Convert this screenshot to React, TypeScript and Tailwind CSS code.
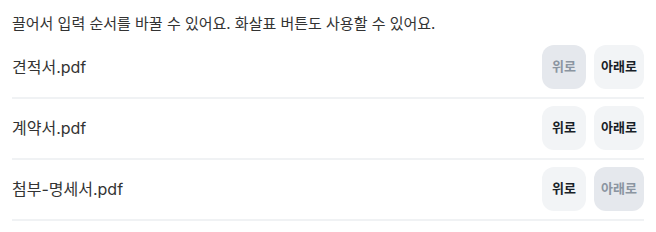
import React from "react";

const files = [
  { name: "견적서.pdf", upDisabled: true, downDisabled: false },
  { name: "계약서.pdf", upDisabled: false, downDisabled: false },
  { name: "첨부-명세서.pdf", upDisabled: false, downDisabled: true },
];

function Btn({ label, disabled, wide }: { label: string; disabled: boolean; wide?: boolean }) {
  return (
    <button
      disabled={disabled}
      className={
        disabled
          ? "h-11 rounded-xl bg-[#e5e8ed] text-[13px] font-semibold text-[#8b95a1] flex items-center justify-center " + (wide ? "w-[50px]" : "w-11")
          : "h-11 rounded-xl bg-[#f2f4f6] text-[13px] font-bold text-[#191f28] flex items-center justify-center " + (wide ? "w-[50px]" : "w-11")
      }
    >
      {label}
    </button>
  );
}

export default function App() {
  return (
    <div
      className="w-[656px] h-[232px] bg-white px-3 pt-3 text-[#333333]"
      style={{ fontFamily: '"Inter", "Noto Sans CJK KR", sans-serif' }}
    >
      <p className="text-[15px] leading-6 mb-[2px]">
        끌어서 입력 순서를 바꿀 수 있어요. 화살표 버튼도 사용할 수 있어요.
      </p>
      <ul>
        {files.map((f) => (
          <li
            key={f.name}
            className="flex items-center justify-between pt-[7px] pb-2 border-b-2 border-[#f0f2f4]"
          >
            <span className="text-[16px]">{f.name}</span>
            <div className="flex gap-2">
              <Btn label="위로" disabled={f.upDisabled} />
              <Btn label="아래로" disabled={f.downDisabled} wide />
            </div>
          </li>
        ))}
      </ul>
    </div>
  );
}
